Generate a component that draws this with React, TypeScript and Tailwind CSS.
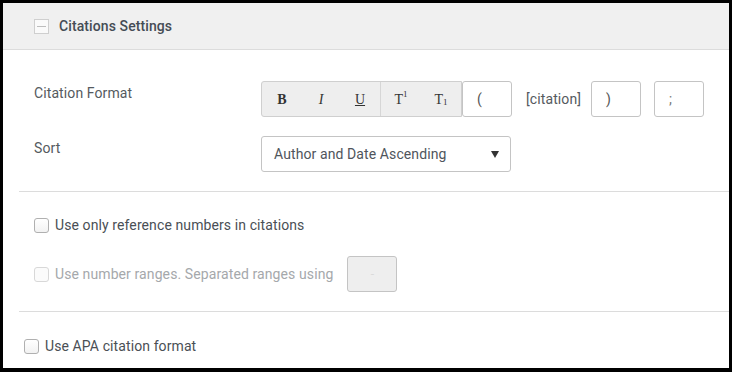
import React from "react";

const roboto = { fontFamily: "Roboto, 'Liberation Sans', sans-serif" } as React.CSSProperties;
const serif = { fontFamily: "'Liberation Serif', 'Times New Roman', serif" } as React.CSSProperties;

function Check({ disabled = false }: { disabled?: boolean }) {
  return (
    <span
      className={
        "inline-block w-[15px] h-[15px] rounded-[3px] border shrink-0 " +
        (disabled ? "border-[#d8d8d8] bg-[#fbfbfb]" : "border-[#b0b0b0] bg-gradient-to-b from-white to-[#f2f2f2]")
      }
    />
  );
}

export default function App() {
  return (
    <div className="w-[732px] h-[372px] bg-black pt-[3px] pl-[3px] pr-[3px] pb-[4px] tracking-[0.1px]" style={roboto}>
      <div className="w-full h-full bg-white flex flex-col overflow-hidden">
        {/* Header */}
        <div className="h-[47px] shrink-0 bg-[#f0f0f0] border-b border-[#dcdcdc] flex items-center pl-[31px]">
          <span className="w-[15px] h-[15px] border border-[#cfcfcf] bg-[#fafafa] flex items-center justify-center">
            <span className="block w-[9px] h-[1px] bg-[#bdbdbd]" />
          </span>
          <span className="ml-[10px] text-[14px] font-medium text-[#454c55]">Citations Settings</span>
        </div>

        {/* Section 1 */}
        <div className="pt-[31px] pb-[19px] pl-[31px] flex flex-col gap-[19px]">
          <div className="flex items-start">
            <div className="w-[227px] mt-[2px] leading-[20px] text-[14px] text-[#555a60]">Citation Format</div>
            <div className="flex items-center">
              <div className="flex h-[36px] bg-[#eeeeee] border border-[#cfcfcf] rounded-l-[3px] text-[#333] tracking-normal" style={serif}>
                <div className="w-[40px] flex items-center justify-center font-bold text-[14px]">B</div>
                <div className="w-[38px] flex items-center justify-center italic text-[14px]">I</div>
                <div className="w-[40px] flex items-center justify-center underline text-[14px]">U</div>
                <div className="w-[1px] bg-[#d6d6d6]" />
                <div className="w-[40px] flex items-center justify-center text-[14px]">
                  T<span className="text-[9px] relative -top-[4px]">1</span>
                </div>
                <div className="w-[40px] flex items-center justify-center text-[14px]">
                  T<span className="text-[9px] relative top-[4px]">1</span>
                </div>
              </div>
              <div className="w-[50px] h-[36px] border border-[#c4c4c4] rounded-[3px] bg-white flex items-center pl-[14px] text-[14px] text-[#555]">(</div>
              <div className="ml-[14px] text-[14px] text-[#555a60]">[citation]</div>
              <div className="ml-[10px] w-[50px] h-[36px] border border-[#c4c4c4] rounded-[3px] bg-white flex items-center pl-[14px] text-[14px] text-[#555]">)</div>
              <div className="ml-[13px] w-[50px] h-[36px] border border-[#c4c4c4] rounded-[3px] bg-white flex items-center pl-[14px] text-[14px] text-[#777]">;</div>
            </div>
          </div>
          <div className="flex items-start">
            <div className="w-[227px] mt-[2px] leading-[20px] text-[14px] text-[#555a60]">Sort</div>
            <div className="w-[250px] h-[36px] border border-[#c4c4c4] rounded-[3px] bg-white flex items-center justify-between pl-[12px] pr-[11px]">
              <span className="text-[14px] text-[#4f555c]">Author and Date Ascending</span>
              <svg width="8" height="7" viewBox="0 0 8 7">
                <path d="M0 0 L8 0 L4 7 Z" fill="#333" />
              </svg>
            </div>
          </div>
        </div>

        <div className="ml-[16px] h-[1px] bg-[#dcdcdc] shrink-0" />

        {/* Section 2 */}
        <div className="pt-[23px] pb-[19px] pl-[31px] flex flex-col gap-[21px]">
          <div className="flex items-center h-[20px] gap-[6px]">
            <Check />
            <span className="text-[14px] text-[#4a4f55]">Use only reference numbers in citations</span>
          </div>
          <div className="flex items-center h-[36px]">
            <Check disabled />
            <span className="ml-[6px] text-[14px] text-[#a5a8ab]">Use number ranges. Separated ranges using</span>
            <div className="ml-[14px] w-[50px] h-[36px] border border-[#c4c4c4] rounded-[3px] bg-[#eeeeee] flex items-center justify-center text-[12px] text-[#dadada]">-</div>
          </div>
        </div>

        <div className="ml-[16px] h-[1px] bg-[#dcdcdc] shrink-0" />

        <div className="pt-[24px] pl-[21px]">
          <div className="flex items-center h-[20px] gap-[6px]">
            <Check />
            <span className="text-[14px] text-[#4a4f55]">Use APA citation format</span>
          </div>
        </div>
      </div>
    </div>
  );
}
